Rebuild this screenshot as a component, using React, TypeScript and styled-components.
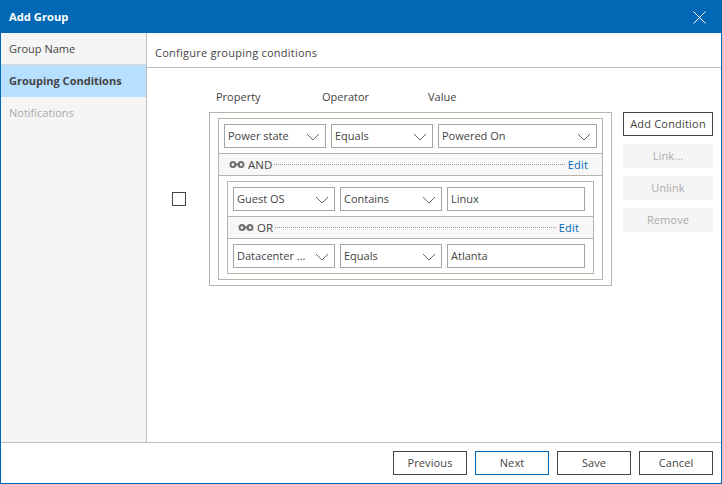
import React from "react";
import styled, { createGlobalStyle } from "styled-components";

const Global = createGlobalStyle`
  html, body { margin: 0; padding: 0; background: #fff; }
  * { box-sizing: border-box; }
  body { font-family: "Open Sans", "Noto Sans", "Liberation Sans", sans-serif; font-size: 11px; color: #444; }
`;

const Window = styled.div`
  width: 722px; height: 484px; display: flex; flex-direction: column;
  border: 1px solid #0068b4; border-top: 0; background: #fff; overflow: hidden;
`;
const TitleBar = styled.header`
  height: 33px; margin: 0 -1px; padding: 0 16px 0 9px; flex: none; display: flex; align-items: center; justify-content: space-between;
  background: #0068b4; color: #fff; font-weight: 700; font-size: 11.2px;
`;
const CloseIcon = styled.svg`width: 13px; height: 13px; display: block; margin-top: 1px;`;
const Body = styled.div`flex: 1; min-height: 0; display: flex;`;
const Sidebar = styled.nav`width: 146px; flex: none; background: #f5f5f5; border-right: 1px solid #bfbfbf;`;
const Step = styled.div<{ $active?: boolean; $disabled?: boolean; $first?: boolean }>`
  height: 32px; padding: 0 0 ${p => (p.$first ? 0 : 2)}px 8px; display: flex; align-items: center;
  font-weight: ${p => (p.$active ? 700 : 400)};
  background: ${p => (p.$active ? "#b7dfff" : "transparent")};
  color: ${p => (p.$disabled ? "#aaa" : "#444")};
  border-bottom: ${p => (p.$first ? "1px solid #d8d8d8" : "0")};
`;
const Content = styled.main`flex: 1; min-width: 0; display: flex; flex-direction: column;`;
const Heading = styled.div`
  height: 35px; flex: none; padding: 5px 0 0 8px; display: flex; align-items: center;
  border-bottom: 1px solid #bfbfbf; letter-spacing: 0.24px;
`;
const Labels = styled.div`display: flex; height: 44px; flex: none; padding: 19px 0 7px 69px; align-items: center;`;
const ColumnLabel = styled.div`width: 106px;`;
const Editor = styled.div`display: flex; align-items: flex-start; padding-left: 25px;`;
const CheckBox = styled.div`width: 14px; height: 14px; flex: none; margin-right: 23px; align-self: center; border: 1px solid #444; background: #fff;`;
const Group = styled.div<{ $level: number }>`
  border: 1px solid #b4b4aa;
  padding: ${p => (p.$level === 0 ? "5px 8px" : "5px 0 0")};
  ${p => p.$level === 0 && "width: 403px; flex: none;"}
  ${p => p.$level === 2 && "margin: 5px 8px; padding-bottom: 0;"}
`;
const FieldRow = styled.div<{ $right: number; $top?: number }>`
  display: flex; gap: 5px; padding: ${p => p.$top ?? 0}px ${p => p.$right}px 5px 5px;
`;
const Field = styled.div<{ $w: number }>`
  width: ${p => p.$w}px; height: 24px; flex: none; display: flex; align-items: center; justify-content: space-between;
  border: 1px solid #a5a5a5; padding: 0 5px 1px 3px; background: #fff; white-space: nowrap;
`;
const Chevron = styled.svg`width: 14px; height: 8px; flex: none; margin-top: 2px;`;
const LinkRow = styled.div`
  height: 23px; display: flex; align-items: center; padding: 0 14px 0 10px; background: #f7f7f7;
  border-top: 1px solid #b4b4aa; border-bottom: 1px solid #b4b4aa; font-size: 11.5px;
`;
const LinkIcon = styled.svg`width: 16px; height: 7px; flex: none; margin-right: 3px;`;
const Dots = styled.span`flex: 1; border-top: 1px dotted #999; margin: 0 3px 0 2px;`;
const Edit = styled.a`color: #0068b4; font-size: 11px; letter-spacing: 0.2px; cursor: pointer;`;
const Actions = styled.div`width: 90px; flex: none; margin-left: 11px; display: flex; flex-direction: column; gap: 8px;`;
const Button = styled.button<{ $tone?: "default" | "primary" | "off" }>`
  height: 24px; width: 100%; padding: 0 0 2px; font: inherit; cursor: default; letter-spacing: 0.1px;
  color: ${p => (p.$tone === "off" ? "#aaa" : "#444")};
  background: ${p => (p.$tone === "off" ? "#f5f5f5" : "#fff")};
  border: 1px solid ${p => (p.$tone === "off" ? "#f5f5f5" : p.$tone === "primary" ? "#0068b4" : "#444")};
`;
const AddButton = styled(Button)`letter-spacing: 0.2px;`;
const Footer = styled.footer`
  height: 41px; flex: none; padding: 8px 8px 8px 0; border-top: 1px solid #bfbfbf;
  display: flex; justify-content: flex-end; gap: 8px; background: #fff;
`;
const FooterButton = styled(Button)`width: 74px;`;

const Down = () => (
  <Chevron viewBox="0 0 14 8"><path d="M1 1l6 6 6-6" fill="none" stroke="#666" strokeWidth="1" /></Chevron>
);
const Select = ({ w, children }: { w: number; children: React.ReactNode }) => (
  <Field $w={w}><span>{children}</span><Down /></Field>
);
const Chain = () => (
  <LinkIcon viewBox="0 0 16 7">
    <circle cx="4" cy="3.5" r="2.5" fill="none" stroke="#707070" strokeWidth="2" />
    <circle cx="12" cy="3.5" r="2.5" fill="none" stroke="#707070" strokeWidth="2" />
    <path d="M5 3.5h6" stroke="#707070" strokeWidth="2" />
  </LinkIcon>
);
const Link = ({ op }: { op: string }) => (
  <LinkRow><Chain />{op}<Dots /><Edit>Edit</Edit></LinkRow>
);

export default function App() {
  return (
    <Window>
      <Global />
      <TitleBar>
        Add Group
        <CloseIcon viewBox="0 0 13 13"><path d="M.5.5l12 12M12.5.5l-12 12" stroke="#fff" strokeWidth="1" fill="none" /></CloseIcon>
      </TitleBar>
      <Body>
        <Sidebar>
          <Step $first>Group Name</Step>
          <Step $active>Grouping Conditions</Step>
          <Step $disabled>Notifications</Step>
        </Sidebar>
        <Content>
          <Heading>Configure grouping conditions</Heading>
          <Labels>
            <ColumnLabel>Property</ColumnLabel>
            <ColumnLabel>Operator</ColumnLabel>
            <ColumnLabel>Value</ColumnLabel>
          </Labels>
          <Editor>
            <CheckBox />
            <Group $level={0}>
              <Group $level={1}>
                <FieldRow $right={5}>
                  <Select w={102}>Power state</Select>
                  <Select w={102}>Equals</Select>
                  <Select w={159}>Powered On</Select>
                </FieldRow>
                <Link op="AND" />
                <Group $level={2}>
                  <FieldRow $right={8}>
                    <Select w={102}>Guest OS</Select>
                    <Select w={102}>Contains</Select>
                    <Field $w={138}>Linux</Field>
                  </FieldRow>
                  <Link op="OR" />
                  <FieldRow $right={8} $top={5}>
                    <Select w={102}>Datacenter ...</Select>
                    <Select w={102}>Equals</Select>
                    <Field $w={138}>Atlanta</Field>
                  </FieldRow>
                </Group>
              </Group>
            </Group>
            <Actions>
              <AddButton>Add Condition</AddButton>
              <Button $tone="off">Link...</Button>
              <Button $tone="off">Unlink</Button>
              <Button $tone="off">Remove</Button>
            </Actions>
          </Editor>
        </Content>
      </Body>
      <Footer>
        <FooterButton>Previous</FooterButton>
        <FooterButton $tone="primary">Next</FooterButton>
        <FooterButton>Save</FooterButton>
        <FooterButton>Cancel</FooterButton>
      </Footer>
    </Window>
  );
}
